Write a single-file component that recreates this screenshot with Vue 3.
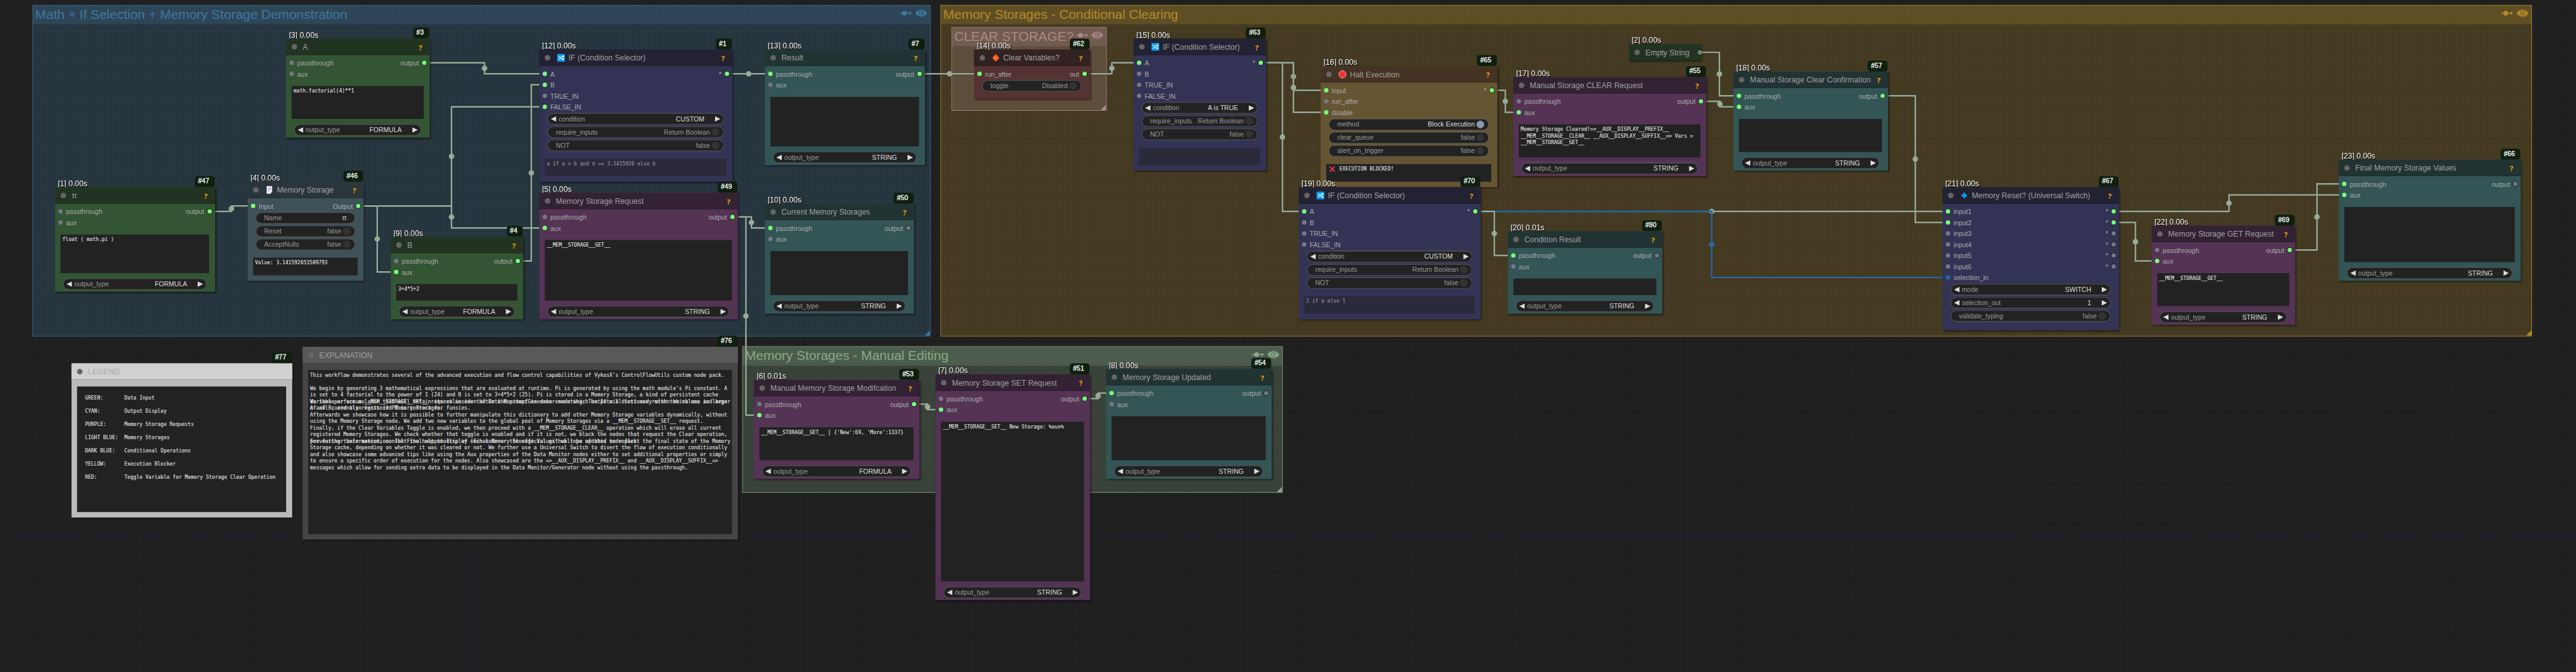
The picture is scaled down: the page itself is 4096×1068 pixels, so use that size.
<script setup>
const groups = [
  { title: 'Math + If Selection + Memory Storage Demonstration', x: 60, y: 10, w: 1630, h: 600, color: '#3f789e' },
  { title: 'Memory Storages - Conditional Clearing', x: 1710, y: 10, w: 2890, h: 600, color: '#b58b2a' },
  { title: 'CLEAR STORAGE?', x: 1730, y: 50, w: 280, h: 150, color: '#aa8888' },
  { title: 'Memory Storages - Manual Editing', x: 1350, y: 630, w: 980, h: 264, color: '#88aa88' }
]

const L = '#9a9'
const B = '#2868a0'
const links = [
  [381, 384, 460, 374, L], [771, 114, 990, 134, L], [651, 374, 990, 194, L],
  [651, 374, 990, 414, L], [651, 374, 720, 494, L], [941, 474, 990, 154, L],
  [1321, 134, 1400, 134, L], [1331, 394, 1400, 414, L], [1331, 394, 1380, 754, L],
  [1671, 134, 1780, 134, L], [1971, 134, 2070, 114, L], [2291, 114, 2410, 164, L],
  [2291, 114, 2410, 204, L], [2291, 114, 2370, 384, L], [2711, 164, 2760, 204, L],
  [3091, 184, 3160, 194, L], [3089, 95, 3160, 174, L], [3421, 174, 3540, 404, L],
  [2681, 384, 3540, 384, L], [2681, 384, 3540, 504, B], [2681, 384, 2750, 464, L],
  [3841, 384, 4260, 354, L], [3841, 404, 3920, 474, L], [4161, 454, 4260, 334, L],
  [1661, 734, 1710, 744, L], [1971, 724, 2020, 714, L]
].map(([x1, y1, x2, y2, color]) => {
  const mx = (x1 + x2) / 2
  return { color, mx, my: (y1 + y2) / 2, points: `${x1},${y1} ${mx},${y1} ${mx},${y2} ${x2},${y2}` }
})

const combo = (label, value) => ({ kind: 'combo', label, value })
const toggle = (label, value, on = false) => ({ kind: 'toggle', label, value, on })

// A data monitor/generator node: passthrough + aux in, one output, text box, output_type selector
const data = (o) => ({
  inputs: [['passthrough', o.in?.[0]], ['aux', o.in?.[1]]],
  outputs: [['output', o.out]],
  widgets: [],
  footer: combo('output_type', o.type || 'STRING'),
  text: '', help: true, ...o
})
const cond = (o) => ({
  title: 'IF (Condition Selector)', icon: 'shuffle', theme: 'blue',
  inputs: ['A', 'B', 'TRUE_IN', 'FALSE_IN'].map((n, i) => [n, o.in[i]]),
  outputs: [['*', 1]],
  widgets: [combo('condition', o.cond), toggle('require_inputs', 'Return Boolean'), toggle('NOT', 'false')],
  dim: true, help: true, ...o
})

const legend = [
  '', '  GREEN:       Data Input', '', '  CYAN:        Output Display', '', '  PURPLE:      Memory Storage Requests', '',
  '  LIGHT BLUE:  Memory Storages', '', '  DARK BLUE:   Conditional Operations', '', '  YELLOW:      Execution Blocker', '',
  '  RED:         Toggle Variable for Memory Storage Clear Operation'
].join('\n')

const explanation = [
  "This workflow demonstrates several of the advanced execution and flow control capabilities of VykosX's ControlFlowUtils custom node pack.",
  '',
  "We begin by generating 3 mathematical expressions that are evaluated at runtime. Pi is generated by using the math module's Pi constant. A",
  'is set to 4 factorial to the power of 1 (24) and B is set to 3+4*5+2 (25). Pi is stored in a Memory Storage, a kind of persistent cache',
  'Variable or accumulator that will retain its value even after the prompt is done executing. The If will test and return which one is larger',
  'A and B, and also tests if PI is correct for funsies.',
  'Afterwards we showcase how it is possible to further manipulate this dictionary to add other Memory Storage variables dynamically, without',
  'using the Memory Storage node. We add two new variables to the global pool of Memory Storages via a __MEM__STORAGE__SET__ request.',
  'Finally, if the Clear Variables Toggle is enabled, we then proceed with a __MEM__STORAGE__CLEAR__ operation which will erase all current',
  'registered Memory Storages. We check whether that toggle is enabled and if it is not, we block the nodes that request the Clear operation,',
  "preventing their execution. The Final output display 'Final Memory Storage Values' will be updated to reflect the final state of the Memory",
  'Storage cache, depending on whether it was cleared or not. We further use a Universal Switch to divert the flow of execution conditionally',
  'and also showcase some advanced tips like using the Aux properties of the Data Monitor nodes either to set additional properties or simply',
  'to ensure a specific order of execution for the nodes. Also showcased are the =>__AUX__DISPLAY__PREFIX__ and __AUX__DISPLAY__SUFFIX__=>',
  'messages which allow for sending extra data to be displayed in the Data Monitor/Generator node without using the passthrough.'
].join('\n')

// Lines that the note prints on top of its own wrapped text
const overprint = [
  '', '', '', '',
  'We then perform a __MEM__STORAGE__GET__ request inside the Data Monitor/Generator node which outputs a dictionary with the values and keys',
  'of all currently registered Memory Storages.',
  '', '', '', '',
  'For further information, consult the help tooltip of each node or the official github repo of this node pack.'
].join('\n')

const nodes = [
  data({ id: 47, x: 100, y: 340, w: 290, h: 190, time: '[1] 0.00s', title: 'π', theme: 'green', out: 1, text: 'float ( math.pi )', type: 'FORMULA' }),
  data({ id: 3, x: 520, y: 70, w: 260, h: 180, time: '[3] 0.00s', title: 'A', theme: 'green', out: 1, text: 'math.factorial(4)**1', type: 'FORMULA' }),
  {
    id: 46, x: 450, y: 330, w: 210, h: 180, time: '[4] 0.00s', title: 'Memory Storage', icon: 'page', theme: 'pale', help: true,
    inputs: [['Input', 1]], outputs: [['Output', 1]],
    widgets: [{ kind: 'field', label: 'Name', value: 'π' }, toggle('Reset', 'false'), toggle('AcceptNulls', 'false')],
    text: 'Value: 3.141592653589793'
  },
  data({ id: 4, x: 710, y: 430, w: 240, h: 150, time: '[9] 0.00s', title: 'B', theme: 'green', in: [0, 1], out: 1, text: '3+4*5+2', type: 'FORMULA' }),
  cond({ id: 1, x: 980, y: 90, w: 350, h: 240, time: '[12] 0.00s', in: [1, 1, 0, 1], cond: 'CUSTOM', text: 'a if a > b and π == 3.1415926 else b' }),
  data({ id: 49, x: 980, y: 350, w: 360, h: 230, time: '[5] 0.00s', title: 'Memory Storage Request', theme: 'purple', in: [0, 1], out: 1, text: '__MEM__STORAGE__GET__' }),
  data({ id: 7, x: 1390, y: 90, w: 290, h: 210, time: '[13] 0.00s', title: 'Result', theme: 'cyan', in: [1, 0], out: 1 }),
  data({ id: 50, x: 1390, y: 370, w: 270, h: 200, time: '[10] 0.00s', title: 'Current Memory Storages', theme: 'cyan', in: [1, 0], out: 0 }),
  {
    id: 62, x: 1770, y: 90, w: 210, h: 90, time: '[14] 0.00s', title: 'Clear Variables?', icon: 'diamond', theme: 'red', help: true,
    inputs: [['run_after', 1]], outputs: [['out', 1]], widgets: [toggle('toggle', 'Disabled')]
  },
  cond({ id: 63, x: 2060, y: 70, w: 240, h: 240, time: '[15] 0.00s', in: [1, 0, 0, 0], cond: 'A is TRUE', text: '' }),
  {
    id: 65, x: 2400, y: 120, w: 320, h: 220, time: '[16] 0.00s', title: 'Halt Execution', icon: 'stop', theme: 'yellow', help: true,
    inputs: [['input', 1], ['run_after', 0], ['disable', 1]], outputs: [['*', 1]],
    widgets: [toggle('method', 'Block Execution', true), toggle('clear_queue', 'false'), toggle('alert_on_trigger', 'false')],
    text: ' EXECUTION BLOCKED!', cross: true
  },
  cond({ id: 70, x: 2360, y: 340, w: 330, h: 240, time: '[19] 0.00s', in: [1, 0, 0, 0], cond: 'CUSTOM', text: '2 if a else 1' }),
  data({
    id: 55, x: 2750, y: 140, w: 350, h: 180, time: '[17] 0.00s', title: 'Manual Storage CLEAR Request', theme: 'purple', in: [0, 1], out: 1,
    text: 'Memory Storage Cleared!=>__AUX__DISPLAY__PREFIX__\n__MEM__STORAGE__CLEAR__ __AUX__DISPLAY__SUFFIX__=> Vars =\n__MEM__STORAGE__GET__'
  }),
  { x: 2960, y: 80, w: 130, h: 30, time: '[2] 0.00s', title: 'Empty String', theme: 'green', collapsed: true },
  data({ id: 57, x: 3150, y: 130, w: 280, h: 180, time: '[18] 0.00s', title: 'Manual Storage Clear Confirmation', theme: 'cyan', in: [1, 1], out: 1 }),
  data({ id: 80, x: 2740, y: 420, w: 280, h: 150, time: '[20] 0.01s', title: 'Condition Result', theme: 'cyan', in: [1, 0], out: 0 }),
  {
    id: 67, x: 3530, y: 340, w: 320, h: 260, time: '[21] 0.00s', title: 'Memory Reset? (Universal Switch)', icon: 'gem', theme: 'blue', help: true,
    inputs: [['input1', 1], ['input2', 1], ['input3', 0], ['input4', 0], ['input5', 0], ['input6', 0], ['selection_in', 2]],
    outputs: [['*', 1], ['*', 1], ['*', 0], ['*', 0], ['*', 0], ['*', 0]],
    widgets: [combo('mode', 'SWITCH'), combo('selection_out', '1'), toggle('validate_typing', 'false')]
  },
  data({ id: 69, x: 3910, y: 410, w: 260, h: 180, time: '[22] 0.00s', title: 'Memory Storage GET Request', theme: 'purple', in: [0, 1], out: 1, text: '__MEM__STORAGE__GET__' }),
  data({ id: 66, x: 4250, y: 290, w: 330, h: 220, time: '[23] 0.00s', title: 'Final Memory Storage Values', theme: 'cyan', in: [1, 1], out: 0 }),
  { id: 77, x: 130, y: 660, w: 400, h: 280, title: 'LEGEND', theme: 'light', note: true, text: legend },
  { id: 76, x: 550, y: 630, w: 790, h: 350, title: 'EXPLANATION', theme: 'grey', note: true, text: explanation, over: overprint },
  data({ id: 53, x: 1370, y: 690, w: 300, h: 180, time: '[6] 0.01s', title: 'Manual Memory Storage Modifcation', theme: 'purple', in: [0, 1], out: 1, text: "__MEM__STORAGE__GET__ | {'New':69, 'More':1337}", type: 'FORMULA' }),
  data({ id: 51, x: 1700, y: 680, w: 280, h: 410, time: '[7] 0.00s', title: 'Memory Storage SET Request', theme: 'purple', in: [0, 1], out: 1, text: '__MEM__STORAGE__SET__ New Storage: %aux%' }),
  data({ id: 54, x: 2010, y: 670, w: 300, h: 200, time: '[8] 0.00s', title: 'Memory Storage Updated', theme: 'cyan', in: [1, 0], out: 0 })
]

const box = (o, extra = 0) => ({ left: o.x + 'px', top: o.y + 'px', width: o.w + extra + 'px', height: o.h + 'px' })
const dot = (s) => (s === 2 ? 'int' : s ? 'on' : 'off')
const lashes = Array.from({ length: 18 }, (_, i) => {
  const a = (i * Math.PI) / 9
  return { x1: 8 * Math.cos(a), y1: 4.5 * Math.sin(a), x2: 11 * Math.cos(a), y2: 7.5 * Math.sin(a) }
})
</script>

<template>
  <div class="viewport">
    <div class="canvas">
      <section v-for="g in groups" :key="g.title" class="group" :style="{ ...box(g), '--c': g.color }">
        <header>
          <span class="gtitle">{{ g.title }}</span>
          <svg class="gicons" width="50" height="16" viewBox="0 0 50 16">
            <path d="M0 8H19" stroke="currentColor" stroke-width="1.6" />
            <path d="M17.5 4.8L22 8L17.5 11.2z" fill="currentColor" />
            <circle cx="8.5" cy="8" r="4.3" fill="currentColor" />
            <g transform="translate(39 8)">
              <line v-for="(l, i) in lashes" :key="i" v-bind="l" stroke="currentColor" stroke-width="1.1" />
              <path d="M-10 0Q-5.5 -5.6 0 -5.6T10 0Q5.5 5.6 0 5.6T-10 0z" fill="currentColor" />
              <circle r="3.6" fill="none" stroke="#0006" stroke-width="1.1" />
              <path d="M.3 -2Q2 -1.4 1.9 .6" fill="none" stroke="#0006" stroke-width="1.1" />
            </g>
          </svg>
        </header>
        <i class="grip"></i>
      </section>

      <svg class="links" width="4681" height="1220" viewBox="0 0 4681 1220">
        <g v-for="(l, i) in links" :key="i">
          <polyline :points="l.points" fill="none" stroke="#000" stroke-opacity=".18" stroke-width="4.4" />
          <polyline :points="l.points" fill="none" :stroke="l.color" stroke-width="2.8" />
          <circle :cx="l.mx" :cy="l.my" r="5" :fill="l.color" />
        </g>
      </svg>

      <article v-for="(n, k) in nodes" :key="k" class="node" :class="n.theme" :style="box(n, 1)">
        <span v-if="n.time" class="time">{{ n.time }}</span>
        <span v-if="n.id" class="badge">#{{ n.id }}</span>
        <header class="title">
          <i class="state"></i>
          <svg v-if="n.icon" class="ticon" width="19" height="16" viewBox="0 0 19 16">
            <template v-if="n.icon === 'shuffle'">
              <rect x="2.5" y="1" width="14" height="14" rx="1" fill="#0a9eea" />
              <path d="M4.5 5.5H6.5L11 10.5H14M4.5 10.5H6.5L11 5.5H14M12.6 3.6L14.6 5.5L12.6 7.4M12.6 8.6L14.6 10.5L12.6 12.4" fill="none" stroke="#fff" stroke-width="1.2" />
            </template>
            <path v-else-if="n.icon === 'diamond'" d="M9.5 1.4L16 8L9.5 14.6L3 8z" fill="#ff6723" />
            <path v-else-if="n.icon === 'gem'" d="M9.5 2.5Q11 6.2 14.8 8Q11 9.8 9.5 13.5Q8 9.8 4.2 8Q8 6.2 9.5 2.5z" fill="#0a9eea" stroke="#0a9eea" stroke-width="1" />
            <path v-else-if="n.icon === 'stop'" d="M7 1.5H12L15.8 5.3V10.7L12 14.5H7L3.2 10.7V5.3z" fill="#f92f2f" stroke="#f3c4c4" stroke-width="1" />
            <template v-else>
              <path d="M4.5 1H14.5V12L11.5 15H4.5z" fill="#f1eaf8" />
              <path d="M6.5 4.5H12.5M6.5 7H12.5M6.5 9.5H10" stroke="#998ea4" stroke-width="1" />
              <path d="M14.5 12H11.5V15z" fill="#998ea4" />
            </template>
          </svg>
          <span class="name">{{ n.title }}</span>
          <b v-if="n.help" class="help">?</b>
          <i v-if="n.collapsed" class="dot plug"></i>
        </header>
        <div v-if="!n.collapsed" class="body">
          <div v-if="n.inputs" class="slots">
            <ul class="in">
              <li v-for="s in n.inputs" :key="s[0]"><i class="dot" :class="dot(s[1])"></i>{{ s[0] }}</li>
            </ul>
            <ul class="out">
              <li v-for="(s, i) in n.outputs" :key="i">{{ s[0] }}<i class="dot ring" :class="dot(s[1])"></i></li>
            </ul>
          </div>
          <div v-if="n.widgets && n.widgets.length" class="widgets">
            <div v-for="w in n.widgets" :key="w.label" class="pill" :class="[w.kind, { active: w.on }]">
              <i v-if="w.kind === 'combo'" class="arrow left"></i>
              <span class="label">{{ w.label }}</span>
              <span class="value">{{ w.value }}</span>
              <i v-if="w.kind === 'combo'" class="arrow right"></i>
              <i v-if="w.kind === 'toggle'" class="knob"></i>
            </div>
          </div>
          <div v-if="n.text !== undefined" class="area" :class="{ monitor: n.footer, note: n.note, dim: n.dim }">
            <svg v-if="n.cross" class="cross" width="15" height="12" viewBox="0 0 15 12"><path d="M2.5 1.5L11.5 10.5M11.5 1.5L2.5 10.5" stroke="#f92f60" stroke-width="2.2" /></svg>{{ n.text }}<div v-if="n.over" class="over">{{ n.over }}</div>
          </div>
          <div v-if="n.footer" class="pill combo foot">
            <i class="arrow left"></i>
            <span class="label">{{ n.footer.label }}</span>
            <span class="value">{{ n.footer.value }}</span>
            <i class="arrow right"></i>
          </div>
        </div>
      </article>
    </div>
  </div>
</template>

<style>
body { margin: 0; background: #212121; }
</style>

<style scoped>
.viewport { width: 4096px; height: 1068px; overflow: hidden; background: #212121; }
.canvas {
  position: relative; width: 4682px; height: 1221px; overflow: hidden;
  transform: scale(.875); transform-origin: 0 0;
  font-family: "Liberation Sans", Arial, sans-serif; font-size: 12px;
  background-color: #212121;
  background-image:
    linear-gradient(#1e2240, #1e2240), linear-gradient(#1e2240, #1e2240),
    linear-gradient(90deg, #1a1a1a 1.6px, transparent 1.6px), linear-gradient(#1a1a1a 1.6px, transparent 1.6px),
    linear-gradient(90deg, #1d1d1d 1px, transparent 1px), linear-gradient(#1d1d1d 1px, transparent 1px);
  background-size: 1px 100%, 100% 1px, 100px 100px, 100px 100px, 10px 10px, 10px 10px;
  background-position: 860px 0, 0 970px, 60px 0, 0 50px, 0 0, 0 0;
  background-repeat: no-repeat, no-repeat, repeat, repeat, repeat, repeat;
}

.group {
  position: absolute; box-sizing: border-box; color: var(--c);
  background: color-mix(in srgb, var(--c) 25%, transparent);
  outline: 1px solid var(--c); outline-offset: -.5px;
}
.group header {
  height: 33.6px; display: flex; justify-content: space-between;
  background: color-mix(in srgb, var(--c) 25%, transparent);
}
.gtitle { padding-left: 4px; font-size: 24px; line-height: 31.3px; white-space: nowrap; }
.gicons { flex: none; margin: 6px 5px 0 -60px; }
.grip {
  position: absolute; right: 0; bottom: 0; width: 10px; height: 10px;
  background: var(--c); clip-path: polygon(100% 0, 100% 100%, 0 100%);
}
.links { position: absolute; left: 0; top: 0; }

.node {
  position: absolute; display: flex; flex-direction: column;
  background: var(--body); box-shadow: 2px 2px 3px rgba(0, 0, 0, .5);
}
.green { --head: #223322; --body: #335533; }
.cyan { --head: #223333; --body: #335555; }
.purple { --head: #332233; --body: #553355; }
.blue { --head: #222233; --body: #333355; }
.yellow { --head: #443322; --body: #665533; }
.red { --head: #332222; --body: #553333; }
.pale { --head: #2a363b; --body: #3f5159; }
.light { --head: #d0d0d0; --body: #bbbbbb; }
.grey { --head: #595959; --body: #454545; }

.time {
  position: absolute; left: 5px; top: -17px; font-size: 14px; line-height: 20px; color: #fff;
  text-shadow: 1px 1px 0 #000, 1px 1px 1px #000; white-space: nowrap;
}
.badge {
  position: absolute; right: 1px; top: -20px; height: 20px; padding: 0 10px 0 5.6px; box-sizing: border-box;
  border-radius: 5px; background: #0f1f0f; color: #fff; font-size: 12px; line-height: 19.5px;
  -webkit-text-stroke: .35px #fff;
}
.title {
  position: relative; flex: none; height: 30px; box-sizing: border-box; padding: 0 16px 0 10px;
  display: flex; align-items: center; background: var(--head); color: #a0a0a0; font-size: 14px; white-space: nowrap;
}
.title::after { content: ""; position: absolute; left: 0; right: 0; bottom: 0; height: 1px; background: rgba(0, 0, 0, .2); }
.light .title { color: #aaa; }
.light .title::after { background: #8e8e8e; }
.state { flex: none; width: 10px; height: 10px; border-radius: 50%; background: #666; margin-right: 10px; }
.ticon { flex: none; margin-right: 4px; }
.name { line-height: 29px; }
.help { position: absolute; right: 13px; top: 6px; width: 8px; font: bold 13px/20px "Open Sans", sans-serif; color: #ffa500; text-align: center; }
.plug { position: absolute; right: -1.5px; top: 11px; background: #686; }

.body { flex: 1; min-height: 0; display: flex; flex-direction: column; padding-top: 4px; }
.slots { display: flex; justify-content: space-between; padding: 0 6px; color: #aaa; }
ul { list-style: none; margin: 0; padding: 0; }
li { height: 20px; display: flex; align-items: center; gap: 6px; line-height: 20px; padding-top: 1px; box-sizing: border-box; }
li .dot { margin-top: -1px; }
.out li { justify-content: flex-end; }
.dot { width: 8px; height: 8px; border-radius: 50%; flex: none; }
.on { background: #7f7; }
.off { background: #778; }
.int { background: #2868a0; }
.ring { box-shadow: 0 0 0 1px #111a11; }

.widgets { display: flex; flex-direction: column; gap: 4px; margin: 2px 15px 0; padding-right: 1px; }
.pill {
  position: relative; height: 20px; box-sizing: border-box; flex: none; display: flex; align-items: center;
  background: #222; border-radius: 10px; padding: 0 35px 0 20px; color: #999; line-height: 20px; white-space: nowrap;
  box-shadow: 0 0 0 .5px #666, inset 0 0 0 .5px #666;
}
.label { flex: 1; }
.combo .value, .field .value, .active .value { color: #ddd; }
.toggle, .field { padding-left: 15px; }
.toggle { padding-right: 7.8px; }
.field { padding-right: 15px; }
.knob { width: 14.4px; height: 14.4px; border-radius: 50%; background: #333; margin-left: 2.8px; }
.active .knob { background: #8899aa; }
.arrow { position: absolute; top: 5px; width: 10px; height: 10px; background: #ddd; }
.arrow.left { left: 6px; clip-path: polygon(100% 0, 100% 100%, 0 50%); }
.arrow.right { right: 6px; clip-path: polygon(0 0, 0 100%, 100% 50%); }
.foot { margin: 10px 16px 4px 15px; }

.area {
  position: relative; flex: 1; min-height: 0; margin: 14px 11px 10px 10px; padding: 2.8px 3.5px 0; box-sizing: border-box;
  background: #222; color: #ddd; white-space: pre; overflow: hidden;
  font: 9.136px/12px "DejaVu Sans Mono", monospace;
  -webkit-text-stroke: .2px #ddd;
}
.area.monitor { margin: 12px 11px 0 10px; }
.area.note { margin: 8px 11px 10px 10px; }
.area.dim { opacity: .5; }
.cross { vertical-align: -2.5px; margin: -1px 0; }
.over { position: absolute; left: 3.5px; top: 2.8px; }
</style>
